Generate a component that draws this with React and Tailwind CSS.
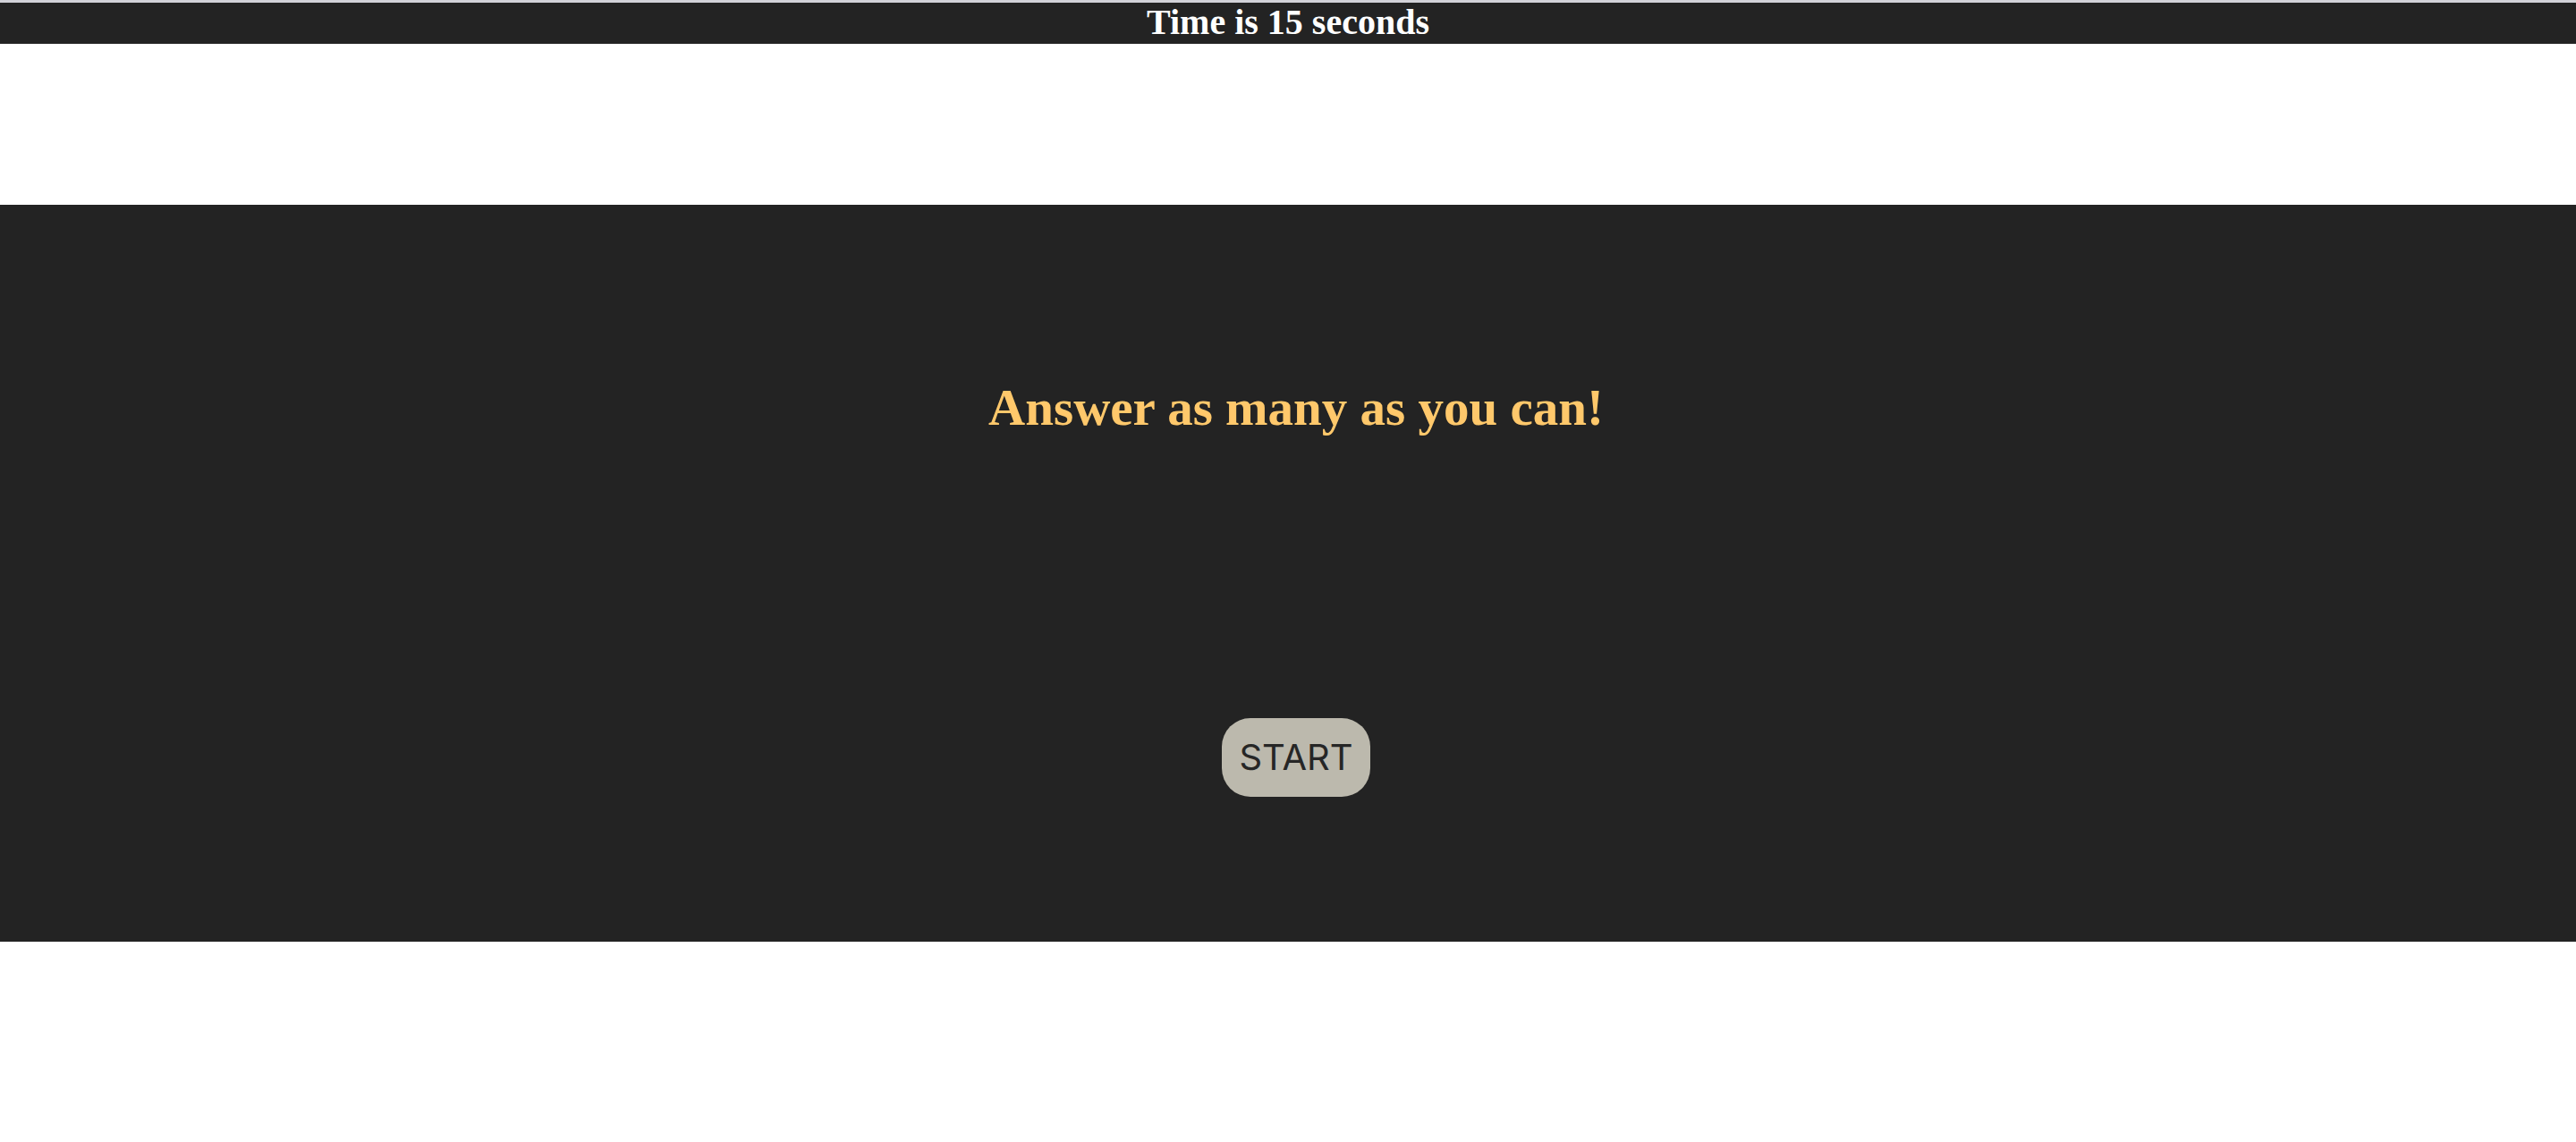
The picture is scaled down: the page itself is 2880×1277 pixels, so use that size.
import React from 'react';

const App = () => {
  return (
    <div className="min-h-screen bg-white">
      {/* Timer bar */}
      <div className="h-[3px] bg-[#d2d2d8]" />
      <div className="h-[46px] bg-[#232323] text-center">
        <span className="text-white text-[40px] leading-[43px] font-bold font-['Liberation_Serif',serif]">
          Time is 15 seconds
        </span>
      </div>

      {/* Game panel */}
      <div className="mt-[180px] h-[824px] bg-[#232323] pl-[18px] flex flex-col items-center">
        <h1 className="mt-[197px] h-[60px] leading-[60px] text-[57px] font-bold text-[#ffc86b] font-['Liberation_Serif',serif]">
          Answer as many as you can!
        </h1>
        <button className="mt-[317px] w-[166px] h-[88px] rounded-[32px] bg-[#bcb9ad] text-[#262626] text-[40px] font-['Inter',sans-serif] flex items-center justify-center">
          START
        </button>
      </div>
    </div>
  );
};

export default App;
